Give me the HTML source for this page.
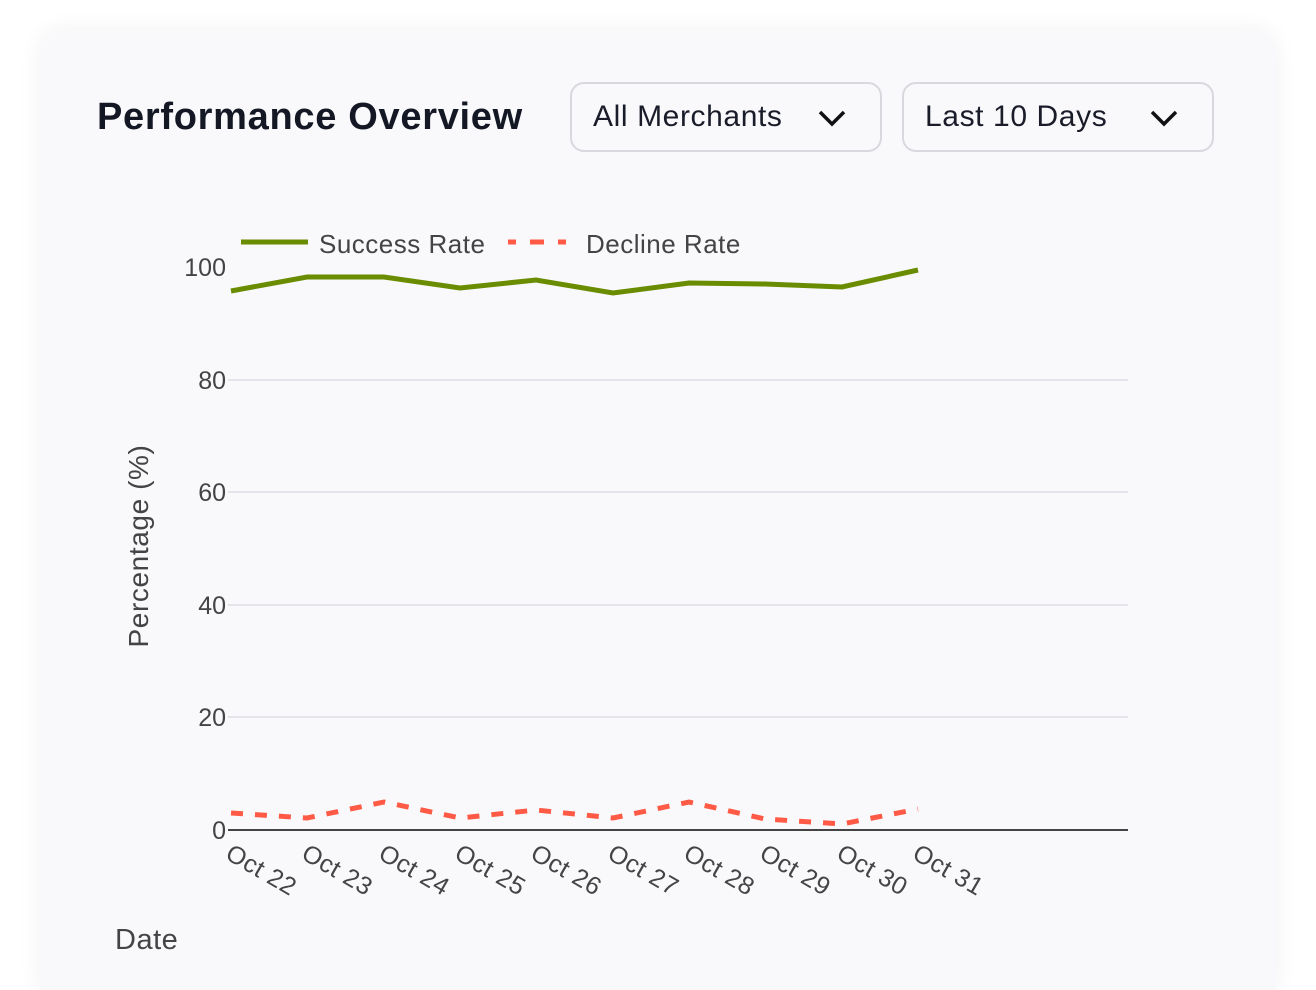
<!DOCTYPE html>
<html style="width:1316px;height:990px;overflow:hidden"><head><style>
body{margin:0;width:1316px;height:990px;background:#fff;overflow:hidden;font-family:"Liberation Sans","DejaVu Sans",sans-serif;position:relative;}
.card{position:absolute;left:40px;top:30px;width:1236px;height:960px;background:#f9f9fc;border-radius:22px 22px 0 0;box-shadow:0 0 24px rgba(0,0,0,0.06);}
.title{position:absolute;left:97px;top:96px;font-size:38px;font-weight:600;color:#141824;letter-spacing:0.7px;}
.dd{position:absolute;top:82px;height:70px;width:312px;border:2px solid #d8d8de;border-radius:14px;box-sizing:border-box;background:#f9f9fc;font-size:30px;color:#1a1d29;letter-spacing:0.6px;}
.dd span{position:absolute;left:21px;top:16px;}
.dd svg{position:absolute;right:34px;top:25px;}
</style></head><body>
<div class="card"></div>
<div class="title">Performance Overview</div>
<div class="dd" style="left:570px"><span>All Merchants</span><svg width="28" height="18" viewBox="0 0 28 18"><path d="M2 3 L14 15 L26 3" fill="none" stroke="#111" stroke-width="3.5"/></svg></div>
<div class="dd" style="left:902px"><span>Last 10 Days</span><svg width="28" height="18" viewBox="0 0 28 18"><path d="M2 3 L14 15 L26 3" fill="none" stroke="#111" stroke-width="3.5"/></svg></div>
<svg style="position:absolute;left:0;top:0" width="1316" height="990" font-family="Liberation Sans, DejaVu Sans, sans-serif">
<g stroke="#e4e4ea" stroke-width="2">
<line x1="228" y1="380" x2="1128" y2="380"/><line x1="228" y1="492" x2="1128" y2="492"/><line x1="228" y1="605" x2="1128" y2="605"/><line x1="228" y1="717" x2="1128" y2="717"/>
</g>
<line x1="228" y1="830" x2="1128" y2="830" stroke="#444" stroke-width="2"/>
<g font-size="25" fill="#444" text-anchor="end">
<text x="226" y="276">100</text><text x="226" y="389">80</text><text x="226" y="501">60</text><text x="226" y="614">40</text><text x="226" y="726">20</text><text x="226" y="839">0</text>
</g>
<text transform="translate(148,546) rotate(-90)" font-size="28" fill="#444" text-anchor="middle" letter-spacing="0.6">Percentage (%)</text>
<text x="115" y="949" font-size="29" fill="#444" letter-spacing="0.5">Date</text>
<g font-size="25" fill="#444" letter-spacing="0.5">
<text transform="translate(224,858) rotate(30)">Oct 22</text>
<text transform="translate(300,858) rotate(30)">Oct 23</text>
<text transform="translate(377,858) rotate(30)">Oct 24</text>
<text transform="translate(453,858) rotate(30)">Oct 25</text>
<text transform="translate(529,858) rotate(30)">Oct 26</text>
<text transform="translate(606,858) rotate(30)">Oct 27</text>
<text transform="translate(682,858) rotate(30)">Oct 28</text>
<text transform="translate(758,858) rotate(30)">Oct 29</text>
<text transform="translate(835,858) rotate(30)">Oct 30</text>
<text transform="translate(911,858) rotate(30)">Oct 31</text>
</g>
<polyline fill="none" stroke="#6a8c00" stroke-width="5" points="231,291 307,277 384,277 460,288 536,280 613,293 689,283 765,284 842,287 918,270"/>
<polyline fill="none" stroke="#ff5a45" stroke-width="5" stroke-dasharray="12,12" points="231,813 307,818 384,802 460,818 536,810 613,818 689,802 765,819 842,824 918,809"/>
<line x1="241" y1="242" x2="308" y2="242" stroke="#6a8c00" stroke-width="5"/>
<text x="319" y="253" font-size="26" fill="#444" letter-spacing="0.5">Success Rate</text>
<line x1="508" y1="242" x2="575" y2="242" stroke="#ff5a45" stroke-width="5" stroke-dasharray="8,14,14,14"/>
<text x="586" y="253" font-size="26" fill="#444" letter-spacing="0.5">Decline Rate</text>
</svg>
</body></html>
